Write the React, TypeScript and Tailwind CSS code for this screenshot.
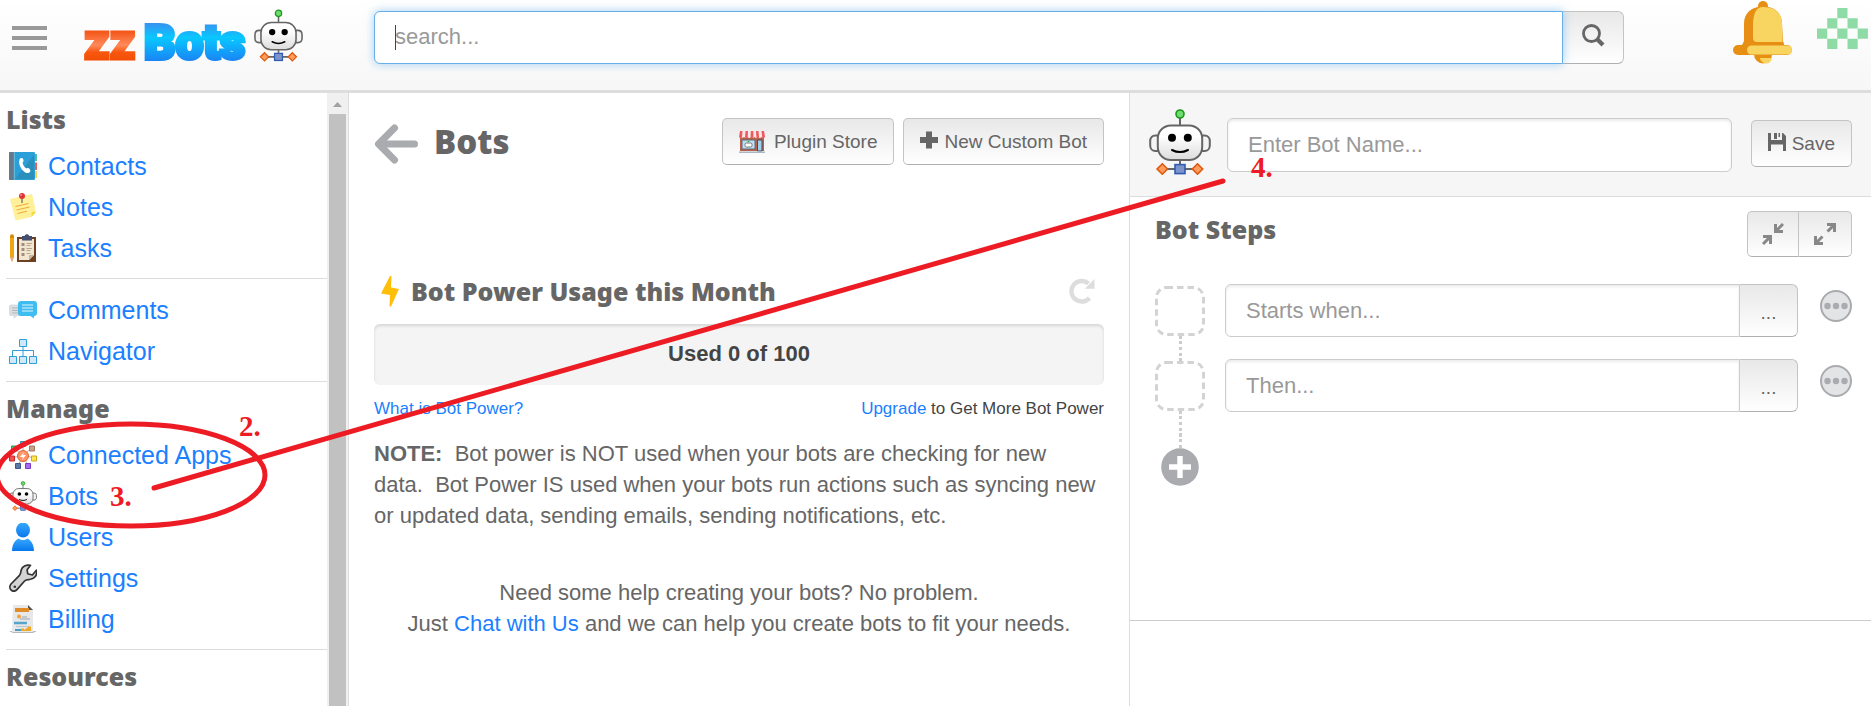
import type { ReactNode } from "react";

const buttonLook =
  "border border-[#c4c4c4] border-b-[#b0b0b0] bg-linear-to-b from-[#e8e8e8] to-white text-[19px] leading-6 text-[#666]";
const inputLook =
  "min-w-0 flex-1 border border-[#ccc] bg-white px-5 text-[22px] leading-[31px] text-[#555] shadow-[inset_0_2px_3px_rgba(0,0,0,0.08)] outline-none placeholder:text-[#999]";
const headingLook = "font-['Noto_Sans',sans-serif] font-black text-[#666]";
const linkLook = "text-[#1a80ff]";

function Robot({ className }: { className: string }) {
  return (
    <svg className={className} viewBox="0 0 62 66" aria-hidden="true">
      <defs>
        <linearGradient id="robotHead" x1="0" y1="0" x2="0" y2="1">
          <stop offset="0.3" stopColor="#fff" />
          <stop offset="1" stopColor="#dcdcdc" />
        </linearGradient>
      </defs>
      <g fill="none" stroke="#666" strokeWidth="2">
        <path d="M31 9v8M31 51v6M17 60h28" />
        <path d="M9 26.500H6.500C3 26.500 1.200 29 1.200 32v4.500c0 3 2 5.500 5.300 5.500H9M53 26.500h2.500c3.500 0 5.300 2.500 5.300 5.500v4.500c0 3-2 5.500-5.300 5.500H53" fill="#f4f4f4" />
        <rect x="8.800" y="16.500" width="44.400" height="34.500" rx="13" fill="url(#robotHead)" />
      </g>
      <circle cx="31" cy="5" r="4" fill="#6fdc6f" stroke="#1a961a" strokeWidth="1.600" />
      <circle cx="23" cy="28.700" r="4" />
      <circle cx="38.800" cy="28.700" r="4" />
      <path d="M23 41c5 2.600 11 2.600 16 0" fill="none" stroke="#000" strokeWidth="2" strokeLinecap="round" />
      <rect x="26" y="55.600" width="10" height="9" fill="#7d93cc" stroke="#2f5cb0" strokeWidth="1.600" />
      <path d="M13.300 54.800l5.200 5.200-5.200 5.200L8.100 60zM48.500 54.800l5.200 5.200-5.200 5.200-5.200-5.200z" fill="#ff9c5c" stroke="#dd5a10" strokeWidth="1.600" />
    </svg>
  );
}

function Icon({ children }: { children: ReactNode }) {
  return (
    <svg className="size-7" viewBox="0 0 28 28" aria-hidden="true">
      {children}
    </svg>
  );
}

const contactsIcon = (
  <Icon>
    <path d="M25 2h3v7h-3z" fill="#47c1a0" />
    <path d="M25 10.500h3V18h-3z" fill="#ef5f52" />
    <path d="M25 19h3v7h-3z" fill="#fbcf55" />
    <rect width="26" height="28" rx="1.200" fill="#2a9fd8" />
    <path d="M0 1.200Q0 0 1.200 0H5v28H1.200Q0 28 0 26.800z" fill="#64798a" />
    <path d="M25 3v24H6z" fill="#2b8fbc" />
    <path d="M5.300 0v28" stroke="#7cc6e6" strokeWidth="0.800" />
    <path d="M11 6.500c1-1 2.600-.8 3.200.7.500 1.500.4 2.700-.7 3.600.6 2.600 2 4.600 4 5.700 1-.9 2.400-.5 3.300.7 1 1.300.8 2.700-.8 3.600C15.500 23 7.500 12.500 11 6.500z" fill="#fff" />
  </Icon>
);
const notesIcon = (
  <Icon>
    <path d="M1 6l22-5 4 18-4.500 5L6.500 27.500z" fill="#fff09a" />
    <path d="M22.500 24l.2-5.200 4.300.2z" fill="#f6da3c" />
    <path d="M6.500 13.500l13-3M7.500 17l13-3M8.500 20.500l9.500-2.300" stroke="#f0a83a" strokeWidth="1" />
    <path d="M13 5v5" stroke="#777" strokeWidth="1.400" />
    <circle cx="13" cy="3" r="3" fill="#e0343a" />
    <circle cx="12" cy="2" r="1" fill="#f5858a" />
  </Icon>
);
const tasksIcon = (
  <Icon>
    <path d="M1 3h4v20l-2 5-2-5z" fill="#f0a512" />
    <path d="M1 1.500Q3-1 5 1.500V4H1z" fill="#d88a0a" />
    <path d="M1 23h4l-2 5z" fill="#dcae8c" />
    <rect x="8" y="3" width="19" height="25" fill="#6e4022" />
    <path d="M10 5h15v16l-5 5H10z" fill="#f0e6d2" />
    <path d="M20 26v-5h5z" fill="#c9b79c" />
    <path d="M13 2h2.500c.8-2.500 4-2.500 4.800 0H23v4.500H13z" fill="#454d70" />
    <path d="M12.500 10.500h3M12.500 15.500h3M12.500 20.500h3" stroke="#a58d78" strokeWidth="3" />
    <path d="M17.500 9.500h5.500M17.500 11.500h4M17.500 14.500h5.500M17.500 16.500h4M17.500 19.500h4" stroke="#b9a48e" strokeWidth="1" />
  </Icon>
);
const commentsIcon = (
  <Icon>
    <path d="M2 8.500h15v11.500H8l-3.500 3V20H2Q0 20 0 18v-7.500q0-2 2-2z" fill="#dadde0" />
    <path d="M3 12h7M3 14.500h7M3 17h7" stroke="#b4b7ba" strokeWidth="1" />
    <path d="M12 5h13q3 0 3 3v9q0 3-3 3v2.500L21.500 20H12q-3 0-3-3V8q0-3 3-3z" fill="#3fbdf0" />
    <path d="M13 9h11M13 12h11M13 15h11" stroke="#e2f5fd" strokeWidth="1" />
  </Icon>
);
const navigatorIcon = (
  <Icon>
    <g fill="#cfe8fa" stroke="#2da0d8" strokeWidth="1">
      <path d="M14 9v10M3.500 19v-5.500h21V19" fill="none" />
      <path d="M10.500 2.500h7v7h-7zM.5 19.500h7v7h-7zM10.500 19.500h7v7h-7zM20.500 19.500h7v7h-7z" />
    </g>
  </Icon>
);
const appsIcon = (
  <Icon>
    <path d="M14 14V4M14 14L4 7M14 14l9-7M14 14L3 17M14 14l11 3M14 14L9 25M14 14l5 11" stroke="#b5b5b5" strokeWidth="1" />
    <circle cx="14" cy="15" r="5.500" fill="#ff9566" stroke="#dd6633" />
    <path d="M15 11l-4 5h3l-1 3 4-5h-3z" fill="#fff" />
    <g strokeWidth="1">
      <path d="M11.500.5h5v5h-5z" fill="#4fc1ea" stroke="#2593c0" />
      <path d="M2.500 5h5v5h-5z" fill="#5ac36e" stroke="#3b9150" />
      <path d="M20.500 5h5v5h-5z" fill="#c9a08a" stroke="#a07860" />
      <path d="M.5 15h5v5h-5z" fill="#f05050" stroke="#c42c2c" />
      <path d="M22.500 15h5v5h-5z" fill="#fce94f" stroke="#d0a820" />
      <path d="M6.500 22.500h5v5h-5z" fill="#5a79a8" stroke="#3c5a88" />
      <path d="M16.500 22.500h5v5h-5z" fill="#a86af0" stroke="#7a3ec4" />
    </g>
  </Icon>
);
const usersIcon = (
  <Icon>
    <defs>
      <linearGradient id="userBlue" x1="0" y1="0" x2="0" y2="1">
        <stop offset="0" stopColor="#38a8ff" />
        <stop offset="1" stopColor="#0878ec" />
      </linearGradient>
    </defs>
    <ellipse cx="14" cy="7" rx="7" ry="7.500" fill="url(#userBlue)" />
    <path d="M3 28c.3-6 2-10 6.500-12.500 3 2 6 2 9 0C23 18 24.700 22 25 28z" fill="url(#userBlue)" />
  </Icon>
);
const settingsIcon = (
  <Icon>
    <path
      d="M21.500 1.300c-4.500-1-8.300 1.200-9.200 4.500-.6 2.400-.5 3.700-1.800 5.500L2 20c-1.800 2.400-1.200 5 .4 6.300 1.800 1.300 4.300.9 6-1.200l7.200-8.100c1.500-1.500 2.800-1.300 5-1.500 5-.6 8-4.500 6.800-9.300l-4 4.800-4.700-1.300-.6-4z"
      fill="#d4d4d4"
      stroke="#333"
      strokeWidth="1.700"
      strokeLinejoin="round"
    />
    <circle cx="5.800" cy="22.800" r="1.300" fill="#333" />
  </Icon>
);
const billingIcon = (
  <Icon>
    <path d="M0 26h28l-4 2H4z" fill="#b8b8b8" />
    <path d="M4 0h15l5 5v22H3z" fill="#e6e8ea" />
    <path d="M19 0l5 5h-5z" fill="#555" />
    <path d="M6 3h14v4H6z" fill="#e08c28" />
    <circle cx="10" cy="11.500" r="2" fill="#f3a236" />
    <path d="M13 12h5M11 14h10" stroke="#b5bcc2" strokeWidth="1.500" />
    <path d="M5 18h13" stroke="#58a5cc" strokeWidth="2.500" />
    <path d="M7 21.500h13" stroke="#c0c8ce" strokeWidth="1.200" />
    <path d="M6 25h7" stroke="#3d94c0" strokeWidth="1.800" />
    <path d="M12 26v-2.500h3V25l3-2 1.500-1.500H22V26z" fill="#f3a821" />
  </Icon>
);

const sections = [
  { title: "Lists", items: [["Contacts", contactsIcon], ["Notes", notesIcon], ["Tasks", tasksIcon]] },
  { title: "", items: [["Comments", commentsIcon], ["Navigator", navigatorIcon]] },
  {
    title: "Manage",
    items: [
      ["Connected Apps", appsIcon],
      ["Bots", <Robot className="h-[30px] w-7" />],
      ["Users", usersIcon],
      ["Settings", settingsIcon],
      ["Billing", billingIcon],
    ],
  },
  { title: "Resources", items: [] },
] as { title: string; items: [string, ReactNode][] }[];

function Header() {
  return (
    <header className="flex h-[93px] shrink-0 items-start border-b-[3px] border-[#ddd] bg-linear-to-b from-white to-[#f7f7f7]">
      <div className="flex w-[374px] shrink-0 items-start pl-3">
        <button type="button" aria-label="Menu" className="mt-[26px] flex w-[35px] flex-col gap-[6px]">
          <span className="h-1 w-full bg-[#999]" />
          <span className="h-1 w-full bg-[#999]" />
          <span className="h-1 w-full bg-[#999]" />
        </button>
        <a href="#home" className="ml-[33px] flex items-start">
          <svg className="h-[84px] w-[172px]" viewBox="0 0 172 84" role="img" aria-label="zzBots">
            <defs>
              <linearGradient id="logoOrange" gradientUnits="userSpaceOnUse" x1="0" y1="32" x2="0" y2="61">
                <stop offset="0" stopColor="#f4581a" />
                <stop offset="0.450" stopColor="#ff8a5c" />
                <stop offset="0.700" stopColor="#f9560e" />
                <stop offset="1" stopColor="#f04e06" />
              </linearGradient>
              <linearGradient id="logoBlue" gradientUnits="userSpaceOnUse" x1="0" y1="22" x2="0" y2="61">
                <stop offset="0" stopColor="#3a8ef0" />
                <stop offset="0.400" stopColor="#08c8ff" />
                <stop offset="1" stopColor="#1a84f4" />
              </linearGradient>
            </defs>
            <text x="4" y="59" fill="url(#logoOrange)" stroke="url(#logoOrange)" strokeWidth="3" className="font-['Roboto',sans-serif] text-[50px] font-black">
              zz
            </text>
            <text x="64" y="59" fill="url(#logoBlue)" stroke="url(#logoBlue)" strokeWidth="4" className="font-['Roboto',sans-serif] text-[49px] font-black">
              Bots
            </text>
          </svg>
          <Robot className="mt-[9px] ml-[2px] h-[53px] w-[49px]" />
        </a>
      </div>
      <form className="mt-[11px] flex h-[53px] min-w-0 flex-1" onSubmit={(e) => e.preventDefault()}>
        <div className="relative flex min-w-0 flex-1">
          <input
            type="search"
            aria-label="Search"
            placeholder="search..."
            className="w-full rounded-l-md border border-[#66afe9] bg-white px-5 pb-[2px] text-[22px] text-[#555] shadow-[0_0_10px_rgba(102,175,233,0.6)] outline-none placeholder:text-[#999]"
          />
          <span className="absolute top-[14px] left-[21px] h-[25px] w-px bg-[#444]" />
        </div>
        <button type="submit" aria-label="Search" className={`flex w-[61px] justify-center rounded-r-md border-l-0 pt-3 ${buttonLook}`}>
          <svg className="size-6" viewBox="0 0 24 24" fill="none" stroke="#666" aria-hidden="true">
            <circle cx="10.500" cy="9.500" r="8" strokeWidth="2.800" />
            <path d="M16 15l6 6" strokeWidth="4.200" />
          </svg>
        </button>
      </form>
      <div className="flex w-[247px] shrink-0 justify-end gap-6">
        <button type="button" aria-label="Notifications">
          <svg className="h-16 w-[60px]" viewBox="0 0 60 64" aria-hidden="true">
            <circle cx="30" cy="6" r="5" fill="#e78f14" />
            <circle cx="30" cy="54.500" r="9" fill="#e78f14" />
            <path d="M27 58h12c-1 5-5 6.500-8 5-2-1-4-2.500-4-5z" fill="#f7d560" />
            <path d="M11 24C11 13 18 6.500 30 6.500S49 13 49 24l1 17 2 6H8l3-6z" fill="#e78f14" />
            <path d="M20 26c0-12 3-19 10-19 12 0 19 6 19 17l.5 18H24q-4 0-4-4z" fill="#f7d560" />
            <rect y="45" width="59" height="10" rx="5" fill="#e78f14" />
            <rect x="14" y="45.500" width="45" height="9" rx="4.500" fill="#f7d560" />
          </svg>
        </button>
        <button type="button" aria-label="Account" className="mt-2 h-[41px]">
          <svg className="h-[41px] w-[54px]" viewBox="0 0 54 41" fill="#8fdba6" aria-hidden="true">
            <path d="M20.300 0h10.200v10.200H20.300zM10.200 10.200h10.200v10.200H10.200zM30.500 10.200h10.200v10.200H30.500zM0 20.500h10.200v10.200H0zM20.300 20.500h10.200v10.200H20.300zM40.700 20.500h10.200v10.200H40.700zM10.200 30.700h10.200V41H10.200zM30.500 30.700h10.200V41H30.500z" />
          </svg>
        </button>
      </div>
    </header>
  );
}

function Sidebar() {
  return (
    <aside className="flex w-[349px] shrink-0 border-r border-[#ddd]">
      <nav className="flex-1 pl-[6px]">
        {sections.map(({ title, items }) => (
          <section key={title} className="border-b border-[#ddd] py-[10px] last:border-b-0 last:pb-0">
            {title && <h2 className={`h-[42px] text-[25px] leading-8 ${headingLook}`}>{title}</h2>}
            <ul>
              {items.map(([label, icon]) => (
                <li key={label}>
                  <a href={`#${label}`} className={`flex h-[41px] items-center gap-[11px] pl-[3px] text-[25px] leading-7 ${linkLook}`}>
                    {icon}
                    {label}
                  </a>
                </li>
              ))}
            </ul>
          </section>
        ))}
      </nav>
      <div className="flex w-[21px] flex-col items-center bg-[#f0f0f0]">
        <svg className="h-[21px] w-[9px]" viewBox="0 0 9 21" aria-hidden="true">
          <path d="M0 14l4.500-5L9 14z" fill="#a3a3a3" />
        </svg>
        <div className="w-[17px] flex-1 bg-[#c1c1c1]" />
      </div>
    </aside>
  );
}

function StoreIcon() {
  return (
    <svg className="h-[22px] w-[26px]" viewBox="0 0 26 22" aria-hidden="true">
      <path d="M1 6h24v14H1z" fill="#b9604a" />
      <path d="M3 9h13v9H3z" fill="#bfe0f2" stroke="#5c6c7c" />
      <path d="M18.500 9H23v11h-4.500z" fill="#9ed0ee" stroke="#3f4f60" />
      <rect x="6" y="12" width="7" height="4" rx="1.500" fill="#fff" stroke="#777" />
      <path d="M9.500 10v1" stroke="#2a2" strokeWidth="1.500" />
      <path d="M0 20.500h26V22H0z" fill="#a9b6c4" />
      <path d="M1 0h24l1 6q-1.500 2-3.500 0-1.500 2-3.500 0-1.500 2-3.500 0-1.500 2-3.500 0-1.500 2-3.500 0-1.500 2-3.500 0Q2 8 0 6z" fill="#fbeaea" />
      <path d="M1 0h2.500L3 6.500Q1.500 8 0 6zM6.500 0H9l-.3 6.500q-1.300 1-2.700 0zM11.800 0h2.500l.2 6.500q-1.500 1-2.900 0zM17 0h2.500l.6 6.500q-1.300 1-2.700 0zM22.500 0H25l1 6q-1.300 2-2.800.5z" fill="#ee5a60" />
    </svg>
  );
}

function BotsPanel() {
  return (
    <main className="flex min-w-0 flex-col border-r border-[#ddd] px-[25px] pt-[25px]">
      <div className="flex items-center">
        <a href="#back" aria-label="Back">
          <svg className="mt-1 h-10 w-11" viewBox="0 0 44 40" fill="none" stroke="#a9abaf" strokeWidth="7" strokeLinecap="round" aria-hidden="true">
            <path d="M40.500 20H6M20.500 4L4.500 20l16 16" strokeLinejoin="round" />
          </svg>
        </a>
        <h1 className={`ml-4 flex-1 text-[33px] leading-[47px] ${headingLook}`}>Bots</h1>
        <div className="flex gap-[9px]">
          <button type="button" className={`flex h-[47px] items-center gap-[9px] rounded-[5px] px-4 ${buttonLook}`}>
            <StoreIcon />
            Plugin Store
          </button>
          <button type="button" className={`flex h-[47px] items-center gap-[6px] rounded-[5px] px-4 ${buttonLook}`}>
            <svg className="mb-[3px] size-[18px]" viewBox="0 0 18 18" fill="#666" aria-hidden="true">
              <path d="M6 .5h6V6h6v6h-6v5.500H6V12H0V6h6z" />
            </svg>
            New Custom Bot
          </button>
        </div>
      </div>

      <div className="mt-[110px] flex items-center">
        <svg className="mr-3 ml-[7px] h-[31px] w-[18px]" viewBox="0 0 18 31" fill="#ffbe08" aria-hidden="true">
          <path d="M9 0h1.500L10 11.500l8 1.500-8 17.500H8.500L9 19 0 17.500z" />
        </svg>
        <h2 className={`flex-1 text-[25px] leading-8 ${headingLook}`}>Bot Power Usage this Month</h2>
        <button type="button" aria-label="Refresh" className="mr-[9px]">
          <svg className="size-[26px]" viewBox="0 0 26 26" aria-hidden="true">
            <path d="M20.500 20A10.300 10.300 0 1 1 19.500 5.500" fill="none" stroke="#ddd" strokeWidth="4.400" />
            <path d="M25.500 1v9.800h-9.800z" fill="#ddd" />
          </svg>
        </button>
      </div>
      <div className="mt-[17px] flex h-[61px] items-center justify-center rounded-md bg-[#f4f4f4] pb-[2px] text-[22px] leading-[31px] font-bold text-[#444] shadow-[inset_0_2px_3px_rgba(0,0,0,0.12)]">
        Used 0 of 100
      </div>
      <div className="mt-3 flex justify-between text-[17px] leading-6 text-[#444]">
        <a href="#power" className={linkLook}>
          What is Bot Power?
        </a>
        <span>
          <a href="#upgrade" className={linkLook}>
            Upgrade
          </a>{" "}
          to Get More Bot Power
        </span>
      </div>
      <p className="mt-[17px] text-[22px] leading-[31px] text-[#666]">
        <b>NOTE:</b>&nbsp; Bot power is NOT used when your bots are checking for new data.&nbsp; Bot Power IS used when your bots run actions
        such as syncing new or updated data, sending emails, sending notifications, etc.
      </p>
      <p className="mt-[46px] text-center text-[22px] leading-[31px] text-[#666]">
        Need some help creating your bots? No problem.
        <br />
        Just{" "}
        <a href="#chat" className={linkLook}>
          Chat with Us
        </a>{" "}
        and we can help you create bots to fit your needs.
      </p>
    </main>
  );
}

function Step({ label }: { label: string }) {
  return (
    <li className="flex h-[75px] items-start">
      <div className="flex flex-col items-center pt-[2px]">
        <svg className="size-[50px]" viewBox="0 0 50 50" aria-hidden="true">
          <rect x="1.500" y="1.500" width="47" height="47" rx="10" fill="none" stroke="#d2d4d4" strokeWidth="3" strokeDasharray="6.500 4" />
        </svg>
        <span className="h-[25px] border-l-[3px] border-dotted border-[#ccc]" />
      </div>
      <div className="ml-5 flex h-[53px] min-w-0 flex-1">
        <input type="text" aria-label={label} placeholder={label} className={`rounded-l-md ${inputLook}`} />
        <button type="button" aria-label={`Choose ${label}`} className={`w-[58px] rounded-r-md border-l-0 pt-1 ${buttonLook}`}>
          ...
        </button>
      </div>
      <button type="button" aria-label="Step options" className="mt-[6px] ml-[22px]">
        <svg className="size-8" viewBox="0 0 32 32" fill="#a9abaf" aria-hidden="true">
          <circle cx="16" cy="16" r="15" fill="#e3e4e6" stroke="#a9abaf" strokeWidth="2" />
          <circle cx="7.500" cy="16" r="3.200" />
          <circle cx="16" cy="16" r="3.200" />
          <circle cx="24.500" cy="16" r="3.200" />
        </svg>
      </button>
    </li>
  );
}

function Editor() {
  return (
    <section className="flex min-w-0 flex-col">
      <form className="flex h-[104px] items-start border-b border-[#ddd] bg-[#f6f6f6] px-[19px] pt-4" onSubmit={(e) => e.preventDefault()}>
        <Robot className="h-[66px] w-[62px] shrink-0" />
        <input type="text" aria-label="Bot name" placeholder="Enter Bot Name..." className={`mt-[9px] ml-4 h-[54px] rounded-md ${inputLook}`} />
        <button type="submit" className={`mt-[11px] ml-[19px] flex h-[47px] items-center gap-[6px] rounded-[5px] px-4 ${buttonLook}`}>
          <svg className="mb-[3px] size-[18px]" viewBox="0 0 18 18" fill="#666" aria-hidden="true">
            <path d="M0 0h3v7h11V0h1l3 3v15h-3v-6.500H3V18H0zM6 0h3v6H6zM10.500 0H12v4h-1.500z" />
          </svg>
          Save
        </button>
      </form>
      <div className="flex h-[424px] flex-col border-b border-[#ccc] pt-[14px] pr-[19px] pl-[25px]">
        <div className="flex items-start justify-between">
          <h2 className={`mt-[2px] text-[25px] leading-8 ${headingLook}`}>Bot Steps</h2>
          <div className="flex h-[46px]">
            <button type="button" aria-label="Collapse steps" className={`flex w-[52px] items-center justify-center rounded-l-[5px] ${buttonLook}`}>
              <svg className="size-[22px]" viewBox="0 0 22 22" fill="none" stroke="#888" strokeWidth="3" aria-hidden="true">
                <path d="M21 1l-7 7M13.500 1v7.500H21M1 21l7-7M8.500 21v-7.500H1" />
              </svg>
            </button>
            <button type="button" aria-label="Expand steps" className={`flex w-[53px] items-center justify-center rounded-r-[5px] border-l-0 ${buttonLook}`}>
              <svg className="size-[22px]" viewBox="0 0 22 22" fill="none" stroke="#888" strokeWidth="3" aria-hidden="true">
                <path d="M13.500 8.500L20 2M13 1.500h7.500V9M8.500 13.500L2 20M1.500 13v7.500H9" />
              </svg>
            </button>
          </div>
        </div>
        <ol className="mt-[27px]">
          <Step label="Starts when..." />
          <Step label="Then..." />
        </ol>
        <div className="flex w-[50px] flex-col items-center">
          <span className="h-[14px] border-l-[3px] border-dotted border-[#ccc]" />
          <button type="button" aria-label="Add step">
            <svg className="size-[38px]" viewBox="0 0 38 38" aria-hidden="true">
              <circle cx="19" cy="19" r="18.800" fill="#a9abaf" />
              <path d="M19 8v22M8 19h22" stroke="#fff" strokeWidth="5.400" />
            </svg>
          </button>
        </div>
      </div>
    </section>
  );
}

function Annotations() {
  return (
    <svg className="pointer-events-none absolute top-0 left-0 h-[706px] w-[1871px]" viewBox="0 0 1871 706" aria-hidden="true">
      <g fill="none" stroke="#ed1c24" strokeWidth="5" strokeLinecap="round">
        <ellipse cx="131" cy="475" rx="134" ry="51" />
        <path d="M154 488L1223 181" />
      </g>
      <g fill="#ed1c24" className="font-['Liberation_Serif',serif] text-[29px] font-bold">
        <text x="239" y="436">2.</text>
        <text x="110" y="506">3.</text>
        <text x="1251" y="177">4.</text>
      </g>
    </svg>
  );
}

export default function App() {
  return (
    <div className="relative flex min-h-screen flex-col overflow-hidden bg-white font-['Liberation_Sans',Arial,sans-serif]">
      <Header />
      <div className="flex flex-1">
        <Sidebar />
        <div className="grid min-w-0 flex-1 grid-cols-[minmax(0,781fr)_minmax(0,741fr)]">
          <BotsPanel />
          <Editor />
        </div>
      </div>
      <Annotations />
    </div>
  );
}
